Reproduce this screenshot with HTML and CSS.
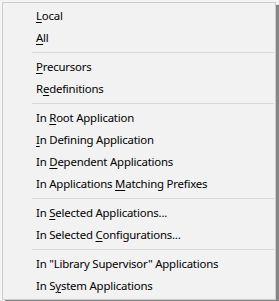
FILE: index.html
```html
<!DOCTYPE html>
<html>
<head>
<meta charset="utf-8">
<link rel="stylesheet" href="styles.css">
</head>
<body>
<div class="menu">
  <div class="item"><u>L</u>ocal</div>
  <div class="item"><u>A</u>ll</div>
  <div class="sep"></div>
  <div class="item"><u>P</u>recursors</div>
  <div class="item">R<u>e</u>definitions</div>
  <div class="sep"></div>
  <div class="item">In <u>R</u>oot Application</div>
  <div class="item"><u>I</u>n Defining Application</div>
  <div class="item">In <u>D</u>ependent Applications</div>
  <div class="item">In Applications <u>M</u>atching Prefixes</div>
  <div class="sep"></div>
  <div class="item">In <u>S</u>elected Applications...</div>
  <div class="item">In Selected <u>C</u>onfigurations...</div>
  <div class="sep"></div>
  <div class="item">In "Library Supervisor" Applications</div>
  <div class="item">In S<u>y</u>stem Applications</div>
</div>
</body>
</html>
```
FILE: styles.css
```css
html, body {
  margin: 0;
  padding: 0;
  background: #f4f4f4;
}
body {
  width: 279px;
  height: 301px;
  overflow: hidden;
}
.menu {
  margin: 2px 0 0 2px;
  width: 272px;
  border: 1px solid #cccccc;
  background: #f2f2f2;
  padding: 2px 0;
  box-shadow: 3px 3px 1px rgba(0, 0, 0, 0.45);
  font-family: "Noto Sans", "Open Sans", sans-serif;
  font-size: 11.4px;
  letter-spacing: -0.2px;
  color: #000;
}
.item {
  height: 22px;
  line-height: 22px;
  padding-left: 33px;
  white-space: nowrap;
}
.item u {
  text-decoration: underline;
  text-underline-offset: 2px;
}
.sep {
  height: 7px;
  display: flex;
  align-items: center;
  margin: 0 1px 0 29px;
}
.sep::before {
  content: "";
  display: block;
  width: 100%;
  height: 1px;
  background: #d7d7d7;
}
```
